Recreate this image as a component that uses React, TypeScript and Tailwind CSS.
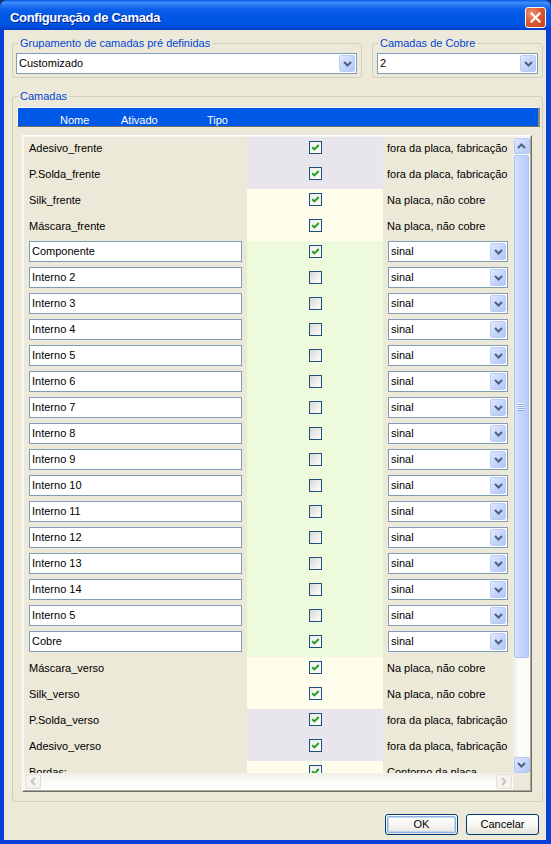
import React from 'react';

type Row = {
  name: string;
  input: boolean;
  checked: boolean;
  tipo: string | null;
  bg: string;
};

const LAV = 'bg-[#e8e6ec]';
const YEL = 'bg-[#fefcea]';
const GRN = 'bg-[#edfadc]';

const FORA = 'fora da placa, fabricação';
const NA = 'Na placa, não cobre';

const internos: Row[] = [2, 3, 4, 5, 6, 7, 8, 9, 10, 11, 12, 13, 14, 5].map(n => ({
  name: `Interno ${n}`,
  input: true,
  checked: false,
  tipo: null,
  bg: GRN,
}));

const rows: Row[] = [
  { name: 'Adesivo_frente', input: false, checked: true, tipo: FORA, bg: LAV },
  { name: 'P.Solda_frente', input: false, checked: true, tipo: FORA, bg: LAV },
  { name: 'Silk_frente', input: false, checked: true, tipo: NA, bg: YEL },
  { name: 'Máscara_frente', input: false, checked: true, tipo: NA, bg: YEL },
  { name: 'Componente', input: true, checked: true, tipo: null, bg: GRN },
  ...internos,
  { name: 'Cobre', input: true, checked: true, tipo: null, bg: GRN },
  { name: 'Máscara_verso', input: false, checked: true, tipo: NA, bg: YEL },
  { name: 'Silk_verso', input: false, checked: true, tipo: NA, bg: YEL },
  { name: 'P.Solda_verso', input: false, checked: true, tipo: FORA, bg: LAV },
  { name: 'Adesivo_verso', input: false, checked: true, tipo: FORA, bg: LAV },
  { name: 'Bordas:', input: false, checked: true, tipo: 'Contorno da placa', bg: YEL },
];

const ComboButton = () => (
  <div className="w-[16px] h-[17px] rounded-[2px] border border-[#bccdf5] bg-[linear-gradient(135deg,#e0e9fe_0%,#c6d6fc_50%,#b2c7f7_100%)] flex items-center justify-center">
    <svg width="9" height="6" viewBox="0 0 9 6">
      <path d="M1 1l3.5 3.5L8 1" stroke="#4d6185" strokeWidth="2" fill="none" />
    </svg>
  </div>
);

const Combo = ({ value, className }: { value: string; className: string }) => (
  <div className={`h-[21px] border border-[#7f9db9] bg-white flex items-center justify-between pl-[2px] pr-[1px] ${className}`}>
    <span className="leading-[13px]">{value}</span>
    <ComboButton />
  </div>
);

const Checkbox = ({ checked }: { checked: boolean }) => (
  <div
    className={`w-[13px] h-[13px] border border-[#1c5180] flex items-center justify-center ${
      checked ? 'bg-[linear-gradient(135deg,#ecebe6,#ffffff)]' : 'bg-[linear-gradient(135deg,#d8d8d2,#ffffff)]'
    }`}
  >
    {checked && (
      <svg width="9" height="9" viewBox="0 0 9 9">
        <path d="M1.2 4.2L3.4 6.4L7.8 2" stroke="#21a121" strokeWidth="2" fill="none" />
      </svg>
    )}
  </div>
);

const GroupBox = ({ legend, className, children }: { legend: string; className: string; children: React.ReactNode }) => (
  <div className={`relative border border-[#d0d0bf] rounded-[3px] ${className}`}>
    <span className="absolute top-[-7px] left-[5px] px-[2px] bg-[#ece9d8] text-[#0046d5] leading-[13px]">{legend}</span>
    {children}
  </div>
);

const ScrollArrow = ({ dir }: { dir: 'up' | 'down' }) => (
  <div className="w-[16px] h-[16px] rounded-[2px] border border-[#b4c8f6] bg-[linear-gradient(135deg,#e2eafe_0%,#c6d6fc_50%,#b4c9f8_100%)] flex items-center justify-center">
    <svg width="9" height="6" viewBox="0 0 9 6">
      <path d={dir === 'up' ? 'M1 5l3.5-3.5L8 5' : 'M1 1l3.5 3.5L8 1'} stroke="#4d6185" strokeWidth="2" fill="none" />
    </svg>
  </div>
);

const HArrow = ({ dir }: { dir: 'left' | 'right' }) => (
  <div className="w-[16px] h-[15px] rounded-[2px] border border-[#e2e0d6] bg-[#f4f3ee] flex items-center justify-center">
    <svg width="6" height="9" viewBox="0 0 6 9">
      <path d={dir === 'left' ? 'M5 1L1.5 4.5L5 8' : 'M1 1l3.5 3.5L1 8'} stroke="#c9c7ba" strokeWidth="2" fill="none" />
    </svg>
  </div>
);

const XpButton = ({ label, primary }: { label: string; primary?: boolean }) => (
  <div className="w-[73px] h-[21px] rounded-[3px] border border-[#003c74] bg-[linear-gradient(180deg,#ffffff_0%,#f5f4ef_60%,#e6e3d8_100%)] p-[1px]">
    <div
      className={`w-full h-full rounded-[2px] flex items-center justify-center leading-[13px] ${
        primary ? 'border border-[#8db2e3] shadow-[inset_0_0_0_1px_#c3d7f5]' : ''
      }`}
    >
      {label}
    </div>
  </div>
);

export default function App() {
  return (
    <div className="w-[551px] h-[844px] bg-[#1b2e6b] overflow-hidden font-['Liberation_Sans',Arial,sans-serif] text-[11px] text-black">
      <div className="w-full h-full flex flex-col rounded-t-[7px] overflow-hidden bg-[#0a3ed8]">
        {/* Title bar */}
        <div className="h-[30px] shrink-0 flex items-start justify-between bg-[linear-gradient(180deg,#0a5ae8_0%,#3d8ffc_9%,#2a7af6_16%,#0b5ee9_32%,#0058e6_55%,#0055e3_80%,#0049d6_94%,#003bc2_100%)]">
          <span className="pl-[10px] pt-[10px] text-[13px] leading-[16px] font-bold text-white tracking-[-0.3px] [text-shadow:1px_1px_0_#0a1f8c]">
            Configuração de Camada
          </span>
          <div className="mt-[7px] mr-[5px] w-[21px] h-[21px] rounded-[3px] border border-white bg-[radial-gradient(circle_at_30%_30%,#f0957a_0%,#e05a32_45%,#c43c10_100%)] flex items-center justify-center">
            <svg width="11" height="11" viewBox="0 0 11 11">
              <path d="M1.5 1.5l8 8M9.5 1.5l-8 8" stroke="white" strokeWidth="2.2" strokeLinecap="square" />
            </svg>
          </div>
        </div>

        {/* Client area */}
        <div className="flex-1 ml-[4px] mr-[5px] mb-[4px] bg-[#ece9d8] flex flex-col">
          <div className="flex gap-[10px] mt-[13px] ml-[8px]">
            <GroupBox legend="Grupamento de camadas pré definidas" className="w-[350px] h-[35px] pt-[9px] pl-[3px]">
              <Combo value="Customizado" className="w-[341px]" />
            </GroupBox>
            <GroupBox legend="Camadas de Cobre" className="w-[171px] h-[35px] pt-[9px] pl-[4px]">
              <Combo value="2" className="w-[161px]" />
            </GroupBox>
          </div>

          <GroupBox legend="Camadas" className="mt-[18px] ml-[8px] w-[531px] h-[706px]">
            {/* Header */}
            <div className="mt-[10px] ml-[4px] w-[523px] h-[20px] border-l border-t border-white border-b border-b-[#716f64] border-r-2 border-r-[#8f8c7f] bg-[#0058e6] overflow-hidden">
              <div className="flex pt-[6px] pl-[42px] text-white leading-[13px]">
                <span className="w-[61px]">Nome</span>
                <span className="w-[86px]">Ativado</span>
                <span>Tipo</span>
              </div>
            </div>

            {/* List panel */}
            <div className="mt-[8px] ml-[9px] w-[510px] h-[657px] border-l border-t border-white border-r border-b border-r-[#716f64] border-b-[#716f64]">
              <div className="w-full h-full border-r border-b border-[#aca899] border-l border-t border-l-[#f5f4ee] border-t-[#f5f4ee] grid grid-cols-[489px_17px] grid-rows-[636px_17px]">
                {/* Rows viewport */}
                <div className="overflow-hidden">
                  {rows.map((r, i) => (
                    <div key={i} className="flex h-[26px]">
                      <div className="w-[223px] pl-[5px]">
                        {r.input ? (
                          <div className="w-[213px] h-[21px] border border-[#7f9db9] bg-white flex items-center pl-[2px] leading-[13px]">
                            {r.name}
                          </div>
                        ) : (
                          <div className="h-[22px] flex items-center leading-[13px]">{r.name}</div>
                        )}
                      </div>
                      <div className={`w-[136px] flex justify-center pt-[4px] ${r.bg}`}>
                        <Checkbox checked={r.checked} />
                      </div>
                      <div className="w-[130px]">
                        {r.tipo === null ? (
                          <div className="pl-[5px]">
                            <Combo value="sinal" className="w-[120px]" />
                          </div>
                        ) : (
                          <div className="h-[22px] flex items-center pl-[4px] leading-[13px] whitespace-nowrap">{r.tipo}</div>
                        )}
                      </div>
                    </div>
                  ))}
                </div>

                {/* Vertical scrollbar */}
                <div className="flex flex-col items-center bg-[linear-gradient(90deg,#eeede5_0%,#fdfdfb_40%,#fafaf6_100%)]">
                  <div className="pt-[1px]">
                    <ScrollArrow dir="up" />
                  </div>
                  <div className="mt-[1px] w-[15px] h-[503px] rounded-[2px] border border-[#aec2f2] bg-[linear-gradient(90deg,#d3e0fd_0%,#c3d5fc_50%,#b6cbf8_100%)] flex flex-col items-center justify-center gap-[1px]">
                    {[0, 1, 2, 3].map(k => (
                      <div key={k} className="w-[7px] h-[1px] bg-[#eef3ff] shadow-[0_1px_0_#8cabe8]" />
                    ))}
                  </div>
                  <div className="mt-auto">
                    <ScrollArrow dir="down" />
                  </div>
                </div>

                {/* Horizontal scrollbar */}
                <div className="flex items-center justify-between px-[1px] bg-[linear-gradient(180deg,#f0efe8_0%,#fbfbf8_50%,#fefefe_100%)]">
                  <HArrow dir="left" />
                  <HArrow dir="right" />
                </div>
                <div className="bg-[#ece9d8]" />
              </div>
            </div>
          </GroupBox>

          <div className="mt-[12px] flex justify-end gap-[8px] pr-[7px]">
            <XpButton label="OK" primary />
            <XpButton label="Cancelar" />
          </div>
        </div>
      </div>
    </div>
  );
}
